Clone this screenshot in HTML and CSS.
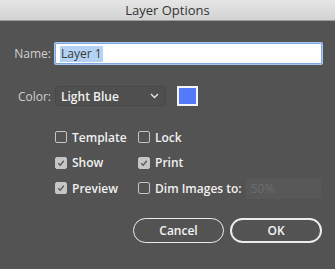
FILE: index.html
```
<!DOCTYPE html>
<html lang="en">
<head>
    <meta charset="UTF-8">
    <title>Layer Options</title>
    <link rel="stylesheet" href="styles.css">
</head>
<body>

<div class="dialog">
    <div class="titlebar">Layer Options</div>

    <div class="row name-row">
        <label class="field-label">Name:</label>
        <div class="text-input"><span class="selected">Layer 1</span></div>
    </div>

    <div class="row color-row">
        <label class="field-label">Color:</label>
        <div class="select">
            <span>Light Blue</span>
            <svg class="chevron" width="9" height="6" viewBox="0 0 9 6"><path d="M1 1 L4.5 4.5 L8 1" fill="none" stroke="#e6e6e6" stroke-width="1.4"/></svg>
        </div>
        <div class="swatch"></div>
    </div>

    <div class="options">
        <div class="opt"><span class="box"></span>Template</div>
        <div class="opt"><span class="box"></span>Lock</div>
        <div class="opt"><span class="box checked"><svg width="12" height="12" viewBox="0 0 12 12"><path d="M3.2 6.2 L5.2 8.2 L8.8 3.8" fill="none" stroke="#5a5a5a" stroke-width="1.4"/></svg></span>Show</div>
        <div class="opt"><span class="box checked"><svg width="12" height="12" viewBox="0 0 12 12"><path d="M3.2 6.2 L5.2 8.2 L8.8 3.8" fill="none" stroke="#5a5a5a" stroke-width="1.4"/></svg></span>Print</div>
        <div class="opt"><span class="box checked"><svg width="12" height="12" viewBox="0 0 12 12"><path d="M3.2 6.2 L5.2 8.2 L8.8 3.8" fill="none" stroke="#5a5a5a" stroke-width="1.4"/></svg></span>Preview</div>
        <div class="opt"><span class="box"></span>Dim Images to:<div class="dim-input">50%</div></div>
    </div>

    <div class="buttons">
        <button class="btn">Cancel</button>
        <button class="btn btn-default">OK</button>
    </div>
</div>

</body>
</html>
```

FILE: styles.css
```
body {
    margin: 0;
    padding: 0;
    background-color: #535353;
    font-family: "Open Sans", "Liberation Sans", sans-serif;
    font-size: 12px;
}

.dialog {
    width: 335px;
    height: 269px;
    background-color: #535353;
    color: #e8e8e8;
}

.titlebar {
    height: 21px;
    line-height: 21px;
    text-align: center;
    font-size: 13px;
    color: #333;
    background: linear-gradient(#e6e6e6, #d2d2d2);
    border-bottom: 1px solid #9a9a9a;
    box-sizing: border-box;
}

.row {
    display: flex;
    align-items: center;
}

.field-label {
    width: 51px;
    text-align: right;
    color: #d0d0d0;
    margin-right: 4px;
}

.name-row {
    margin-top: 22px;
}

.text-input {
    width: 267px;
    height: 21px;
    box-sizing: border-box;
    background-color: #fff;
    border: 1px solid #7fa8e0;
    box-shadow: 0 0 0 1px #a8c6ee;
    border-radius: 1px;
    padding: 0 0 0 4px;
    display: flex;
    align-items: center;
    color: #3a3a3a;
}

.selected {
    background-color: #b4d2f4;
    padding: 0 1px;
    line-height: 16px;
}

.color-row {
    margin-top: 22px;
}

.select {
    width: 111px;
    height: 20px;
    box-sizing: border-box;
    border: 1px solid #484848;
    border-radius: 3px;
    background-color: #4f4f4f;
    display: flex;
    align-items: center;
    justify-content: space-between;
    padding: 0 6px 0 5px;
    font-weight: 600;
    color: #f2f2f2;
}

.swatch {
    width: 21px;
    height: 20px;
    box-sizing: border-box;
    margin-left: 11px;
    border: 2px solid #f4f4f4;
    background-color: #5479fb;
}

.options {
    display: grid;
    grid-template-columns: 83px auto;
    row-gap: 9.5px;
    margin: 23px 0 0 55px;
}

.opt {
    display: flex;
    align-items: center;
    height: 16px;
    font-weight: 600;
    color: #f0f0f0;
}

.box {
    width: 12px;
    height: 12px;
    box-sizing: border-box;
    border: 1px solid #c4c4c4;
    border-radius: 2px;
    margin-right: 5px;
    display: flex;
}

.box.checked {
    background-color: #c6c6c6;
    border-color: #c6c6c6;
}

.box svg {
    margin: -1px;
}

.dim-input {
    width: 75px;
    height: 21px;
    box-sizing: border-box;
    margin-left: 4px;
    background-color: #585858;
    color: #6c6c6c;
    font-weight: 400;
    padding-left: 5px;
    display: flex;
    align-items: center;
}

.buttons {
    display: flex;
    justify-content: flex-end;
    gap: 6px;
    margin: 22px 13px 0 0;
}

.btn {
    width: 91px;
    height: 25px;
    border-radius: 13px;
    background: transparent;
    border: 1.5px solid #ececec;
    color: #f4f4f4;
    font-family: "Open Sans", "Liberation Sans", sans-serif;
    font-size: 12px;
    font-weight: 600;
}

.btn-default {
    width: 92px;
    border-width: 2px;
}
```
